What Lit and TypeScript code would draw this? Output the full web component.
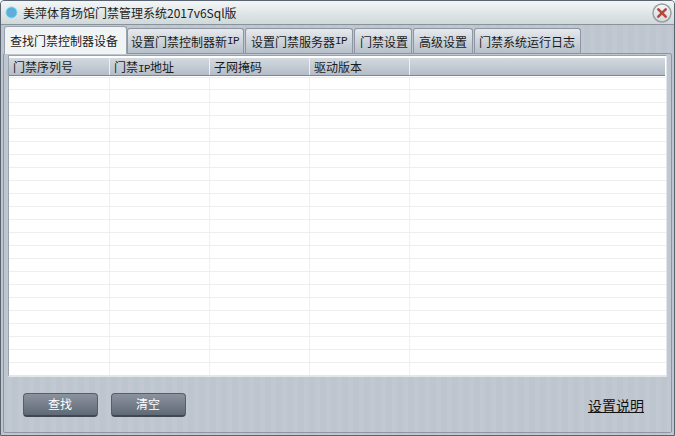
import { LitElement, html, css, svg } from "lit";
import { customElement } from "lit/decorators.js";

const tabs: { w: number; pad: number; label: unknown; active?: boolean }[] = [
  { w: 123, pad: 5, label: "查找门禁控制器设备", active: true },
  { w: 117, pad: 3, label: html`设置门禁控制器新<span class="mono">IP</span>` },
  { w: 108, pad: 5, label: html`设置门禁服务器<span class="mono">IP</span>` },
  { w: 58, pad: 5, label: "门禁设置" },
  { w: 60, pad: 5, label: "高级设置" },
  { w: 107, pad: 4, label: "门禁系统运行日志" },
];

const cols: { w: number; label: unknown }[] = [
  { w: 101, label: "门禁序列号" },
  { w: 100, label: html`门禁<span class="mono">IP</span>地址` },
  { w: 100, label: "子网掩码" },
  { w: 100, label: "驱动版本" },
];

@customElement("app-root")
export class AppRoot extends LitElement {
  static styles = css`
    :host {
      display: block;
      width: 675px;
      height: 436px;
      font-family: "Noto Sans CJK SC", "Liberation Sans", sans-serif;
      font-size: 12px;
      color: #1c1c1c;
    }
    .window {
      box-sizing: border-box;
      width: 675px;
      height: 436px;
      border: 1px solid #5a6470;
      border-radius: 4px 4px 0 0;
      display: flex;
      flex-direction: column;
      background: repeating-linear-gradient(90deg, #bdc5cf 0 6px, #c1c8d1 6px 11px);
      overflow: hidden;
    }
    .title {
      height: 23px;
      flex: none;
      display: flex;
      align-items: center;
      padding: 0 2px 0 4px;
      gap: 5px;
      background: linear-gradient(#f3f6f6, #cfd8da);
      border-bottom: 1px solid #8a929c;
    }
    .title-text {
      flex: 1;
      line-height: 16px;
      color: #202020;
    }
    .tabs {
      display: flex;
      align-items: flex-end;
      height: 28px;
      flex: none;
      padding-left: 3px;
      gap: 1px;
    }
    .tab {
      box-sizing: border-box;
      height: 25px;
      border: 1px solid #8d96a2;
      border-bottom: none;
      border-radius: 3px 3px 0 0;
      background: linear-gradient(#e6eaee, #b6bfca);
      display: flex;
      align-items: center;
      white-space: nowrap;
      color: #1a1a1a;
    }
    .tab.active {
      height: 28px;
      background: #f1f4f5;
      border-color: #9aa2ac;
      margin-bottom: -1px;
      margin-right: -1px;
      position: relative;
    }
    .mono {
      font-family: "Liberation Mono", monospace;
      font-size: 11px;
      letter-spacing: -0.6px;
    }
    .panel {
      flex: 1;
      margin: 0 2px 2px 2px;
      border: 1px solid #8d96a2;
      border-radius: 2px;
      display: flex;
      flex-direction: column;
      padding: 1px 4px 0 4px;
      min-height: 0;
    }
    .table {
      box-sizing: border-box;
      height: 322px;
      flex: none;
      background: #ffffff;
      border: 1px solid #9aa1aa;
      border-bottom: 2px solid #e4e7ea;
      border-right-color: #e4e7ea;
      padding-top: 2px;
      display: flex;
      flex-direction: column;
      overflow: hidden;
    }
    .head {
      display: flex;
      height: 17px;
      flex: none;
      background: linear-gradient(#d3d9df, #b4bdc8);
      border-bottom: 1px solid #7d8692;
      margin-right: 1px;
    }
    .hcell {
      box-sizing: border-box;
      border-right: 1px solid #eef0f2;
      padding-left: 4px;
      line-height: 17px;
      color: #1c1c1c;
      white-space: nowrap;
    }
    .hcell.last {
      flex: 1;
      border-right: none;
    }
    .grid {
      flex: 1;
      margin-top: 1px;
      background-color: #ffffff;
      background-image:
        repeating-linear-gradient(0deg, #eeeeee 0 1px, transparent 1px 13px),
        linear-gradient(90deg,
          transparent 100px, #f0f0f0 100px 101px,
          transparent 101px 200px, #f0f0f0 200px 201px,
          transparent 201px 300px, #f0f0f0 300px 301px,
          transparent 301px 400px, #f0f0f0 400px 401px,
          transparent 401px);
      background-position: 0 1px, 0 0;
    }
    .actions {
      flex: 1;
      display: flex;
      align-items: center;
      padding: 0 23px 0 15px;
      gap: 13px;
    }
    .btn {
      box-sizing: border-box;
      width: 75px;
      height: 24px;
      border: 1px solid #555f6b;
      border-bottom: 2px solid #3e4753;
      border-radius: 4px;
      background: linear-gradient(#8b939e, #5f6975);
      color: #ffffff;
      font: inherit;
      padding: 0 1px 0 0;
      line-height: 20px;
    }
    .help {
      margin-left: auto;
      color: #111;
      text-decoration: underline;
      font-size: 14px;
      line-height: 18px;
    }
  `;

  private closeIcon() {
    return svg`<svg width="20" height="20" viewBox="0 0 20 20">
      <defs><linearGradient id="c" x1="0" y1="0" x2="0" y2="1">
        <stop offset="0" stop-color="#f4f6f6"/><stop offset="1" stop-color="#d5dadb"/>
      </linearGradient></defs>
      <circle cx="10" cy="10" r="9" fill="url(#c)" stroke="#9a9fa3" stroke-width="1.5"/>
      <path d="M6.3 6.3 13.7 13.7M13.7 6.3 6.3 13.7" stroke="#b5483f" stroke-width="2.6" stroke-linecap="round"/>
    </svg>`;
  }

  private appIcon() {
    return svg`<svg width="13" height="13" viewBox="0 0 14 14">
      <circle cx="7" cy="7" r="6.2" fill="#4fb6e0" stroke="#bfe3f0" stroke-width="1"/>
      <circle cx="7" cy="7" r="3.2" fill="#6fa6d8"/>
    </svg>`;
  }

  render() {
    return html`
      <div class="window">
        <div class="title">
          ${this.appIcon()}
          <span class="title-text">美萍体育场馆门禁管理系统2017v6Sql版</span>
          ${this.closeIcon()}
        </div>
        <div class="tabs">
          ${tabs.map(
            (t) => html`<div class="tab ${t.active ? "active" : ""}" style="width:${t.w}px;padding-left:${t.pad}px">${t.label}</div>`
          )}
        </div>
        <div class="panel">
          <div class="table">
            <div class="head">
              ${cols.map((c) => html`<div class="hcell" style="width:${c.w}px">${c.label}</div>`)}
              <div class="hcell last"></div>
            </div>
            <div class="grid"></div>
          </div>
          <div class="actions">
            <button class="btn">查找</button>
            <button class="btn">清空</button>
            <span class="help">设置说明</span>
          </div>
        </div>
      </div>
    `;
  }
}
